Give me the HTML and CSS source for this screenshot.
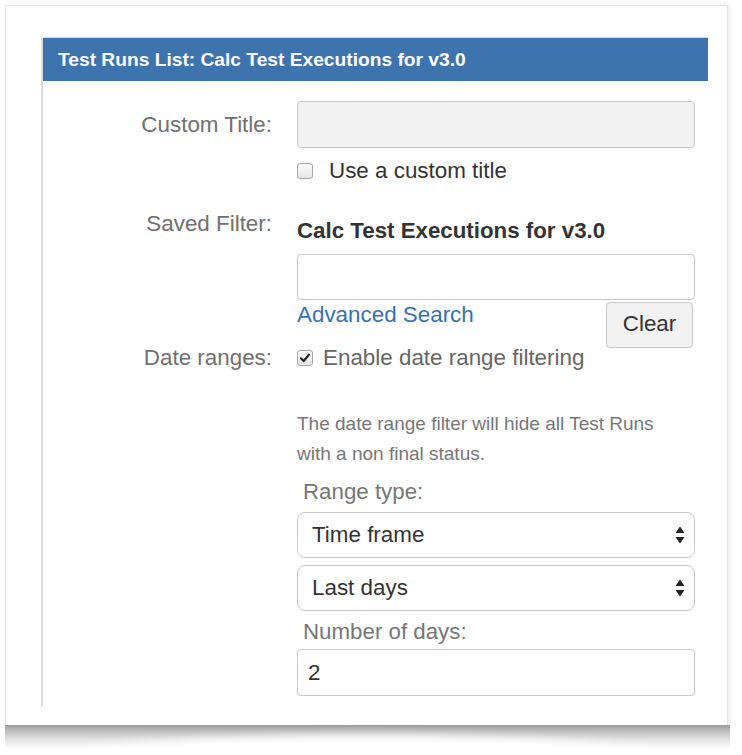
FILE: index.html
```html
<!DOCTYPE html>
<html>
<head>
<meta charset="utf-8">
<link rel="stylesheet" href="styles.css">
</head>
<body>
<div class="page">
  <div class="sheet">
    <div class="panel">
      <div class="panel-head">Test Runs List: Calc Test Executions for v3.0</div>
      <div class="panel-body">
        <div class="row row-title">
          <div class="label label-title">Custom Title:</div>
          <div class="field">
            <div class="input input-disabled"></div>
            <div class="check-line check-custom">
              <span class="cb"></span>
              <span class="cb-text cb-dark">Use a custom title</span>
            </div>
          </div>
        </div>
        <div class="row row-filter">
          <div class="label label-filter">Saved Filter:</div>
          <div class="field">
            <div class="filter-name">Calc Test Executions for v3.0</div>
            <div class="input input-filter"></div>
            <div class="link-row">
              <a class="link">Advanced Search</a>
              <span class="btn">Clear</span>
            </div>
          </div>
        </div>
        <div class="row row-date">
          <div class="label label-date">Date ranges:</div>
          <div class="field">
            <div class="check-line check-date">
              <span class="cb cb-checked"><svg width="12" height="12" viewBox="0 0 12 12"><path d="M2 6.3 L4.7 9 L10 2.6" fill="none" stroke="#222" stroke-width="2.2" stroke-linecap="round" stroke-linejoin="round"/></svg></span>
              <span class="cb-text cb-gray">Enable date range filtering</span>
            </div>
            <p class="help">The date range filter will hide all Test Runs with a non final status.</p>
            <div class="sub-label sub-range">Range type:</div>
            <div class="select select-first">
              <span>Time frame</span>
              <svg class="arrows" width="10" height="18" viewBox="0 0 10 18"><path d="M5 0.5 L9.5 7 L0.5 7 Z M5 17.5 L9.5 11 L0.5 11 Z" fill="#222"/></svg>
            </div>
            <div class="select select-second">
              <span>Last days</span>
              <svg class="arrows" width="10" height="18" viewBox="0 0 10 18"><path d="M5 0.5 L9.5 7 L0.5 7 Z M5 17.5 L9.5 11 L0.5 11 Z" fill="#222"/></svg>
            </div>
            <div class="sub-label sub-days">Number of days:</div>
            <div class="input input-days">2</div>
          </div>
        </div>
      </div>
    </div>
  </div>
  <div class="curl-shadow"></div>
</div>
</body>
</html>
```
FILE: styles.css
```css
html, body {
  margin: 0;
  padding: 0;
  background: #fff;
}
body {
  font-family: "Liberation Sans", Arial, Helvetica, sans-serif;
  color: #333;
}
.page {
  width: 742px;
  height: 755px;
  padding: 5px 0 0 5px;
  box-sizing: border-box;
}
.sheet {
  position: relative;
  z-index: 2;
  box-sizing: border-box;
  width: 723px;
  height: 720px;
  padding: 31px 0 0 35px;
  background: #fff;
  border: 1px solid #e6e6e6;
  border-bottom: none;
  box-shadow: 2px -1px 4px rgba(0, 0, 0, 0.07);
}
.curl-shadow {
  position: relative;
  width: 725px;
  height: 24px;
  overflow: hidden;
  background: linear-gradient(to bottom, #9e9e9e 0, #bdbdbd 25%, #e2e2e2 60%, #fff 100%);
}
.curl-shadow::after {
  content: "";
  position: absolute;
  left: 7%;
  right: 7%;
  top: 11px;
  height: 50px;
  border-radius: 50%;
  background: #fff;
  filter: blur(5px);
}
.panel {
  box-sizing: border-box;
  width: 667px;
  height: 670px;
  border-left: 2px solid #dcdcdc;
  border-top: 1px solid #d6d6d6;
  border-top-left-radius: 3px;
}
.panel-head {
  height: 43px;
  background: #3e74ad;
  color: #fff;
  font-weight: bold;
  font-size: 19.2px;
  line-height: 43px;
  padding-left: 15px;
}
.panel-body {
  padding: 20px 13px 11px 0;
}
.row {
  display: grid;
  grid-template-columns: 229px 398px;
  column-gap: 25px;
  align-items: start;
}
.label {
  text-align: right;
  color: #707070;
  font-size: 22.4px;
}
.label-title {
  line-height: 47px;
}
.label-filter {
  margin-top: 23px;
  line-height: 30px;
}
.label-date {
  line-height: 20px;
}
.input {
  box-sizing: border-box;
  border: 1px solid #c8c8c8;
  border-radius: 4px;
  background: #fff;
}
.input-disabled {
  height: 47px;
  background: #f3f3f3;
}
.input-filter {
  height: 46px;
  margin-top: 8px;
}
.input-days {
  height: 47px;
  margin-top: 2px;
  padding-left: 10px;
  font-size: 22.4px;
  line-height: 45px;
  color: #333;
}
.check-line {
  display: flex;
  align-items: center;
}
.check-custom {
  height: 30px;
  margin-top: 8px;
  gap: 16px;
}
.check-date {
  height: 20px;
  gap: 10px;
}
.cb {
  box-sizing: border-box;
  display: flex;
  align-items: center;
  justify-content: center;
  width: 16px;
  height: 16px;
  border: 1px solid #a9a9a9;
  border-radius: 3px;
  background: linear-gradient(#fdfdfd, #e4e4e4);
  flex: none;
}
.cb-text {
  font-size: 22.4px;
}
.cb-dark {
  color: #333;
}
.cb-gray {
  color: #666;
}
.filter-name {
  margin-top: 30px;
  line-height: 30px;
  font-size: 22.3px;
  font-weight: bold;
  color: #333;
}
.link-row {
  display: flex;
  justify-content: space-between;
  align-items: flex-start;
  height: 48px;
}
.link {
  color: #3572b0;
  font-size: 22.4px;
  line-height: 30px;
  text-decoration: none;
}
.btn {
  box-sizing: border-box;
  width: 87px;
  height: 46px;
  margin-top: 2px;
  margin-right: 2px;
  border: 1px solid #c8c8c8;
  border-radius: 4px;
  background: #f2f2f2;
  color: #333;
  font-size: 22.4px;
  line-height: 42px;
  text-align: center;
}
.help {
  max-width: 372px;
  margin: 41px 0 0;
  font-size: 19px;
  line-height: 30px;
  color: #777;
}
.sub-label {
  padding-left: 6px;
  font-size: 22.3px;
  line-height: 30px;
  color: #777;
}
.sub-range {
  margin-top: 8px;
}
.sub-days {
  margin-top: 6px;
}
.select {
  box-sizing: border-box;
  display: flex;
  align-items: center;
  justify-content: space-between;
  height: 46px;
  padding: 0 9px 0 14px;
  border: 1px solid #c8c8c8;
  border-radius: 8px;
  background: #fff;
  font-size: 22.4px;
  color: #333;
}
.select-first {
  margin-top: 5px;
}
.select-second {
  margin-top: 7px;
}
.arrows {
  display: block;
}
```
